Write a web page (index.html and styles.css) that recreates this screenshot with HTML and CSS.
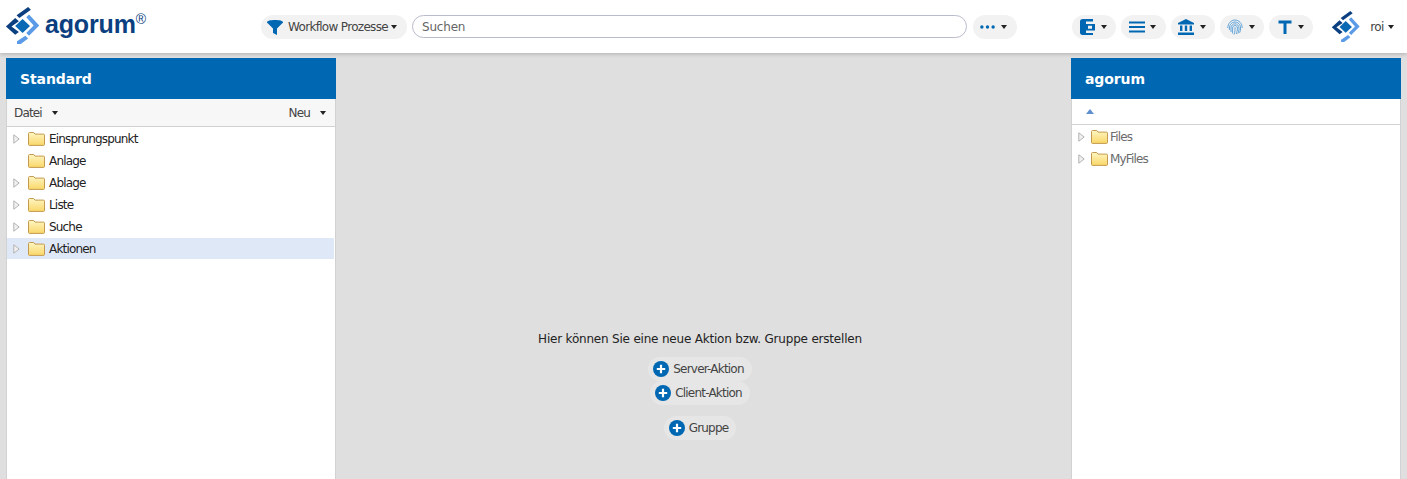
FILE: index.html
```html
<!DOCTYPE html>
<html lang="de">
<head>
<meta charset="utf-8">
<title>agorum</title>
<link rel="stylesheet" href="styles.css">
</head>
<body>
<svg class="defs" width="0" height="0">
  <defs>
    <linearGradient id="folderfill" x1="0" y1="0" x2="0" y2="1">
      <stop offset="0" stop-color="#fff6c4"/>
      <stop offset="1" stop-color="#f9d768"/>
    </linearGradient>
  </defs>
  <symbol id="logo" viewBox="0 0 40 40">
    <polygon points="25,0 28,3 15.500,12 12.500,9" fill="#0b3f80"/>
    <polygon points="11,12 15,15.500 7,21 15,27 11,30 1,21" fill="#0b3f80"/>
    <polygon points="26,8 37,20 26,31 23,28 31,20 23,11" fill="#5b9ae6"/>
    <polygon points="22,31 25,34 17,40 13,40 13,37" fill="#5b9ae6"/>
    <polygon points="19,13 27,20.500 19,28 11,20.500" fill="#0a69b5"/>
  </symbol>
  <symbol id="folder" viewBox="0 0 17 14">
    <path d="M.5 12.400V1.600C.5 1 .9.500 1.500.500h4.200l1.300 1.600h8.500c.6 0 1 .4 1 1v9.300c0 .6-.4 1-1 1h-14c-.6 0-1-.4-1-1z" fill="url(#folderfill)" stroke="#c49a50"/>
  </symbol>
  <symbol id="plus" viewBox="0 0 16 16">
    <circle cx="8" cy="8" r="8" fill="#0068b3"/>
    <path d="M8 3.800v8.400M3.800 8h8.400" stroke="#fff" stroke-width="2.200"/>
  </symbol>
  <symbol id="twisty" viewBox="0 0 7 10">
    <path d="M.8.800 6.200 5 .8 9.200z" fill="#f1f1f1" stroke="#b3b3b3"/>
  </symbol>
</svg>

<header class="topbar">
  <div class="brand">
    <svg class="brand-logo"><use href="#logo"/></svg>
    <span class="brand-name">agorum</span><span class="brand-reg">®</span>
  </div>
  <div class="pill pill-filter">
    <svg class="ico-filter" viewBox="0 0 16 16"><path d="M0 2.200C0 .8 3.500 0 8 0s8 .8 8 2.200c0 .6-.4 1-1 1.400L10 8.500V15l-4-2V8.500L1 3.600C.4 3.200 0 2.800 0 2.200z" fill="#0068b3"/></svg>
    <span>Workflow Prozesse</span><i class="caret"></i>
  </div>
  <input class="search" type="text" placeholder="Suchen">
  <div class="pill pill-more">
    <svg class="ico-dots" viewBox="0 0 16 4"><circle cx="2" cy="2" r="1.800"/><circle cx="8" cy="2" r="1.800"/><circle cx="14" cy="2" r="1.800"/></svg><i class="caret"></i>
  </div>
  <div class="pill pill-icon pill-first">
    <svg class="ico" viewBox="0 0 16 16"><path fill-rule="evenodd" d="M0 2.500C0 1 1 0 2.500 0H13v2.500H6v2.500h9v6.500H6V14h7v2H2.500C1 16 0 15 0 13.500zM8 6.800v3h4v-3z" fill="#0068b3"/></svg><i class="caret"></i>
  </div>
  <div class="pill pill-icon">
    <svg class="ico" viewBox="0 0 16 16"><path d="M0 2.500h16v2H0zM0 7h16v2H0zM0 11.500h16v2H0z" fill="#0068b3"/></svg><i class="caret"></i>
  </div>
  <div class="pill pill-icon">
    <svg class="ico" viewBox="0 0 16 16"><path d="M8 0l8 4v1.600H0V4zM2 6.500h2.400V12H2zM6.800 6.500h2.400V12H6.800zM11.600 6.500H14V12h-2.400zM0 13.500h16V16H0z" fill="#0068b3"/></svg><i class="caret"></i>
  </div>
  <div class="pill pill-icon">
    <svg class="ico" viewBox="0 0 16 16" fill="none" stroke="#3d8fd0" stroke-width=".8"><path d="M.8 9C.8 4.500 4 1 8 1s7.200 3.500 7.200 8"/><path d="M2.400 11V9c0-3.300 2.500-6 5.600-6s5.600 2.700 5.600 6c0 2-.4 3.500-1 4.800"/><path d="M4 13V9c0-2.300 1.800-4.200 4-4.200S12 6.700 12 9c0 2.400-.4 4.200-1.200 5.600"/><path d="M5.600 14.500V9c0-1.400 1.100-2.500 2.400-2.500s2.400 1.100 2.400 2.500c0 2.500-.5 4.500-1.300 6"/><path d="M8 8.200v3c0 1.500-.4 3-1 4.300"/></svg><i class="caret"></i>
  </div>
  <div class="pill pill-icon">
    <svg class="ico" viewBox="0 0 16 16"><path d="M1.500 1.500h13v3h-5V15h-3V4.500h-5z" fill="#0068b3"/></svg><i class="caret"></i>
  </div>
  <svg class="user-logo"><use href="#logo"/></svg>
  <span class="user-name">roi</span><i class="caret"></i>
</header>

<main class="workspace">
  <aside class="panel">
    <h2 class="panel-title">Standard</h2>
    <div class="menubar">
      <span class="menu">Datei<i class="caret"></i></span>
      <span class="menu">Neu<i class="caret"></i></span>
    </div>
    <ul class="tree">
      <li class="row"><svg class="twisty"><use href="#twisty"/></svg><svg class="folder"><use href="#folder"/></svg>Einsprungspunkt</li>
      <li class="row"><span class="twisty"></span><svg class="folder"><use href="#folder"/></svg>Anlage</li>
      <li class="row"><svg class="twisty"><use href="#twisty"/></svg><svg class="folder"><use href="#folder"/></svg>Ablage</li>
      <li class="row"><svg class="twisty"><use href="#twisty"/></svg><svg class="folder"><use href="#folder"/></svg>Liste</li>
      <li class="row"><svg class="twisty"><use href="#twisty"/></svg><svg class="folder"><use href="#folder"/></svg>Suche</li>
      <li class="row row-selected"><svg class="twisty"><use href="#twisty"/></svg><svg class="folder"><use href="#folder"/></svg>Aktionen</li>
    </ul>
  </aside>

  <section class="center">
    <p class="hint">Hier können Sie eine neue Aktion bzw. Gruppe erstellen</p>
    <span class="action"><svg class="plus"><use href="#plus"/></svg>Server-Aktion</span>
    <span class="action"><svg class="plus"><use href="#plus"/></svg>Client-Aktion</span>
    <span class="action action-group"><svg class="plus"><use href="#plus"/></svg>Gruppe</span>
  </section>

  <aside class="panel panel-right">
    <h2 class="panel-title">agorum</h2>
    <div class="upbar"><i class="up"></i></div>
    <ul class="tree tree-right">
      <li class="row"><svg class="twisty"><use href="#twisty"/></svg><svg class="folder"><use href="#folder"/></svg>Files</li>
      <li class="row"><svg class="twisty"><use href="#twisty"/></svg><svg class="folder"><use href="#folder"/></svg>MyFiles</li>
    </ul>
  </aside>
</main>
</body>
</html>
```

FILE: styles.css
```css
* { box-sizing: border-box; }
html, body { height: 100%; }
body {
  margin: 0;
  height: 479px;
  overflow: hidden;
  background: #dfdfdf;
  font-family: "DejaVu Sans", sans-serif;
  font-size: 12px;
  color: #222;
  display: flex;
  flex-direction: column;
}
.defs { position: absolute; }
.topbar {
  flex: none;
  height: 53px;
  background: #fff;
  box-shadow: 0 1px 4px rgba(0,0,0,.22);
  display: flex;
  align-items: center;
  padding-left: 5px;
  position: relative;
}
.brand {
  width: 256px;
  display: flex;
  align-items: center;
  align-self: flex-start;
  padding-top: 7px;
}
.brand-logo { width: 37px; height: 37px; flex: none; }
.brand-name {
  font-family: "Liberation Sans", sans-serif;
  font-weight: 700;
  font-size: 25px;
  letter-spacing: -.15px;
  color: #0b3f80;
  margin-left: 3px;
  margin-top: -3px;
}
.brand-reg {
  font-family: "Liberation Sans", sans-serif;
  font-size: 14px;
  color: #0b3f80;
  align-self: flex-start;
  margin-top: 4px;
}
.pill {
  height: 24px;
  border-radius: 12px;
  background: #f2f2f2;
  display: flex;
  align-items: center;
  flex: none;
  color: #444;
}
.pill-filter { width: 146px; padding-left: 6px; letter-spacing: -.68px; }
.ico-filter { width: 16px; height: 16px; margin-right: 5px; margin-top: 2px; }
.search {
  width: 555px;
  height: 23px;
  margin-left: 5px;
  border: 1px solid #b9bccb;
  border-radius: 12px;
  padding: 0 9px;
  font: 12px "DejaVu Sans", sans-serif;
  letter-spacing: -.2px;
  background: #fff;
  outline: none;
}
.search::placeholder { color: #666; opacity: 1; }
.pill-more { width: 44px; margin-left: 6px; padding-left: 7px; }
.ico-dots { width: 15px; height: 4px; fill: #0068b3; }
.pill-icon { width: 44.25px; margin-left: 5px; padding-left: 7.5px; }
.pill-first { margin-left: 55px; }
.ico { width: 16px; height: 16px; flex: none; }
.caret {
  display: inline-block;
  flex: none;
  width: 0;
  height: 0;
  border-left: 3.5px solid transparent;
  border-right: 3.5px solid transparent;
  border-top: 4px solid #222;
  margin-left: 3px;
  vertical-align: middle;
}
.pill-more .caret { margin-left: 6px; }
.pill-icon .caret { margin-left: 5.5px; }
.user-logo { width: 31px; height: 31px; margin-left: 18px; flex: none; }
.user-name { margin-left: 8px; margin-right: 1px; color: #444; letter-spacing: -.6px; }
.workspace {
  flex: 1;
  min-height: 0;
  display: flex;
  padding: 5px 6px 0;
}
.panel {
  width: 330px;
  flex: none;
  background: #fff;
  border: solid #d2d2d2;
  border-width: 0 1px;
  display: flex;
  flex-direction: column;
}
.panel-title {
  margin: 0 -1px;
  height: 41px;
  padding: 0 14px;
  background: #0068b3;
  color: #fff;
  font-family: "DejaVu Sans", sans-serif;
  font-size: 14px;
  font-weight: 700;
  letter-spacing: -.1px;
  line-height: 42px;
}
.menubar {
  height: 28px;
  background: #f7f7f7;
  border-bottom: 1px solid #d2d2d2;
  display: flex;
  justify-content: space-between;
  align-items: center;
  padding: 0 9px 0 7px;
  letter-spacing: -.85px;
  color: #444;
}
.menu .caret { margin-left: 10px; }
.tree { list-style: none; margin: 0; padding: 1px 0 0; }
.row {
  height: 22px;
  display: flex;
  align-items: center;
  padding-left: 6px;
  letter-spacing: -.82px;
  color: #222;
}
.row-selected { background: #dfe8f6; margin-right: 1px; height: 21px; }
.twisty { width: 7px; height: 10px; flex: none; margin-right: 8px; }
.folder { width: 17px; height: 14px; flex: none; margin-right: 4px; }
.center {
  flex: 1;
  min-width: 0;
  display: flex;
  flex-direction: column;
  align-items: center;
  padding: 273px 7px 0 0;
  color: #222;
}
.hint { margin: 0 0 10px; letter-spacing: -.2px; line-height: 16px; }
.action {
  height: 24px;
  border-radius: 12px;
  background: #e6e6e6;
  display: flex;
  align-items: center;
  padding: 0 8px 0 5px;
  letter-spacing: -.8px;
  color: #444;
}
.action-group { margin-top: 11px; }
.plus { width: 16px; height: 16px; margin-right: 4px; flex: none; }
.upbar {
  height: 26px;
  border-bottom: 1px solid #d2d2d2;
  display: flex;
  align-items: center;
  padding-left: 14px;
}
.up {
  width: 0;
  height: 0;
  border-left: 4.5px solid transparent;
  border-right: 4.5px solid transparent;
  border-bottom: 5px solid #5f8fcf;
}
.tree-right { padding-top: 1px; }
.tree-right .row { color: #6b6b6b; }
.tree-right .twisty { margin-right: 6px; }
.tree-right .folder { margin-right: 2px; }
```
